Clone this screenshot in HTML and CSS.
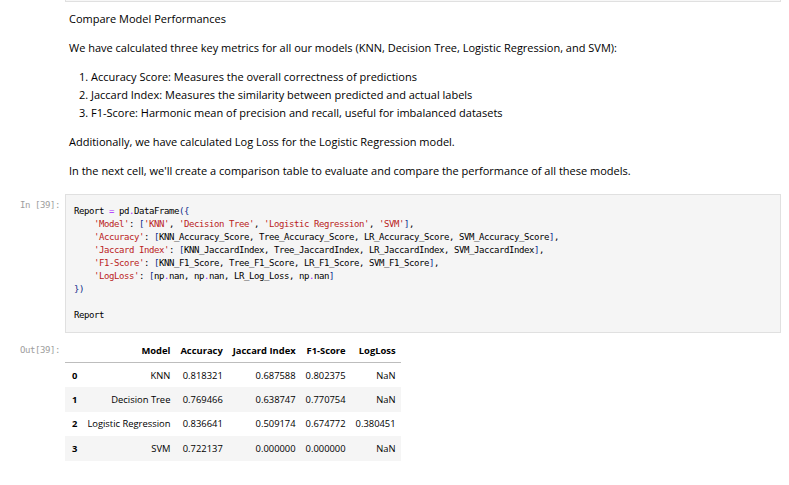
FILE: index.html
```html
<!DOCTYPE html>
<html>
<head>
<meta charset="utf-8">
<link rel="stylesheet" href="styles.css">
</head>
<body>
<div class="notebook">
  <div class="cell">
    <div class="prompt"></div>
    <div class="prev-box"></div>
  </div>
  <div class="cell md-cell">
    <div class="prompt"></div>
    <div class="md-body">
      <p>Compare Model Performances</p>
      <p>We have calculated three key metrics for all our models (KNN, Decision Tree, Logistic Regression, and SVM):</p>
      <ol>
        <li>Accuracy Score: Measures the overall correctness of predictions</li>
        <li>Jaccard Index: Measures the similarity between predicted and actual labels</li>
        <li>F1-Score: Harmonic mean of precision and recall, useful for imbalanced datasets</li>
      </ol>
      <p>Additionally, we have calculated Log Loss for the Logistic Regression model.</p>
      <p>In the next cell, we'll create a comparison table to evaluate and compare the performance of all these models.</p>
    </div>
  </div>
  <div class="cell code-cell">
    <div class="prompt mono">In&nbsp;[39]:</div>
    <div class="input-box">
      <div class="code">
        <div class="line">Report <span class="o">=</span> pd<span class="o">.</span>DataFrame<span class="b">({</span></div>
        <div class="line">    <span class="s">'Model'</span>: <span class="b">[</span><span class="s">'KNN'</span>, <span class="s">'Decision Tree'</span>, <span class="s">'Logistic Regression'</span>, <span class="s">'SVM'</span><span class="b">]</span>,</div>
        <div class="line">    <span class="s">'Accuracy'</span>: <span class="b">[</span>KNN_Accuracy_Score, Tree_Accuracy_Score, LR_Accuracy_Score, SVM_Accuracy_Score<span class="b">]</span>,</div>
        <div class="line">    <span class="s">'Jaccard Index'</span>: <span class="b">[</span>KNN_JaccardIndex, Tree_JaccardIndex, LR_JaccardIndex, SVM_JaccardIndex<span class="b">]</span>,</div>
        <div class="line">    <span class="s">'F1-Score'</span>: <span class="b">[</span>KNN_F1_Score, Tree_F1_Score, LR_F1_Score, SVM_F1_Score<span class="b">]</span>,</div>
        <div class="line">    <span class="s">'LogLoss'</span>: <span class="b">[</span>np<span class="o">.</span>nan, np<span class="o">.</span>nan, LR_Log_Loss, np<span class="o">.</span>nan<span class="b">]</span></div>
        <div class="line"><span class="b">})</span></div>
        <div class="line blank"></div>
        <div class="line">Report</div>
      </div>
    </div>
  </div>
  <div class="cell out-cell">
    <div class="prompt mono out-prompt">Out[39]:</div>
    <div class="output">
      <table class="df">
        <thead>
          <tr><th class="idx"></th><th>Model</th><th>Accuracy</th><th>Jaccard Index</th><th>F1-Score</th><th>LogLoss</th></tr>
        </thead>
        <tbody>
          <tr><th class="idx">0</th><td>KNN</td><td>0.818321</td><td>0.687588</td><td>0.802375</td><td>NaN</td></tr>
          <tr><th class="idx">1</th><td>Decision Tree</td><td>0.769466</td><td>0.638747</td><td>0.770754</td><td>NaN</td></tr>
          <tr><th class="idx">2</th><td>Logistic Regression</td><td>0.836641</td><td>0.509174</td><td>0.674772</td><td>0.380451</td></tr>
          <tr><th class="idx">3</th><td>SVM</td><td>0.722137</td><td>0.000000</td><td>0.000000</td><td>NaN</td></tr>
        </tbody>
      </table>
    </div>
  </div>
</div>
</body>
</html>
```

FILE: styles.css
```css
html, body {
  margin: 0;
  padding: 0;
  background: #ffffff;
}

body {
  font-family: "Open Sans", "Noto Sans", sans-serif;
  font-size: 11px;
  color: #000;
}

.notebook {
  width: 781px;
}

.cell {
  display: flex;
  align-items: flex-start;
}

.prompt {
  width: 60px;
  flex: none;
  padding-right: 5px;
  text-align: right;
  color: #9e9e9e;
}

.mono,
.code {
  font-family: "DejaVu Sans Mono", "Liberation Mono", monospace;
  font-size: 9px;
  letter-spacing: -0.42px;
}

.prev-box {
  flex: 1;
  height: 1px;
  border: 1px solid #e0e0e0;
  border-top: none;
  background: #f7f7f7;
}

.md-body {
  flex: 1;
  padding: 8px 0 0 4px;
  line-height: 18px;
}

.md-body p {
  margin: 0 0 11px 0;
}

.md-body ol {
  margin: 0 0 11px 0;
  padding-left: 22px;
}

.code-cell {
  margin-top: 3px;
}

.code-cell .prompt {
  padding-top: 5px;
  line-height: 13px;
}

.input-box {
  flex: 1;
  background: #f5f5f5;
  border: 1px solid #e0e0e0;
  padding: 10px 8px;
}

.code {
  line-height: 13px;
  color: #000;
}

.line {
  white-space: pre;
  height: 13px;
}

.code .s { color: #ba2121; }
.code .o { color: #aa22ff; }
.code .b { color: #0b2a8a; }

.out-cell {
  margin-top: 5px;
}

.out-prompt {
  line-height: 24px;
}

.output {
  flex: 1;
}

.df {
  border-collapse: collapse;
  border-spacing: 0;
  font-size: 9.4px;
  color: #000;
}

.df th,
.df td {
  padding: 0 5px;
  height: 24px;
  text-align: right;
  vertical-align: middle;
  white-space: nowrap;
}

.df .idx {
  padding-left: 7px;
  text-align: left;
}

.df thead th {
  font-weight: bold;
  border-bottom: 1px solid #bdbdbd;
}

.df tbody th {
  font-weight: bold;
}

.df tbody tr:nth-child(odd) {
  background: #ffffff;
}

.df tbody tr:nth-child(even) {
  background: #f5f5f5;
}

.df tbody tr {
  height: 24.5px;
}
```
